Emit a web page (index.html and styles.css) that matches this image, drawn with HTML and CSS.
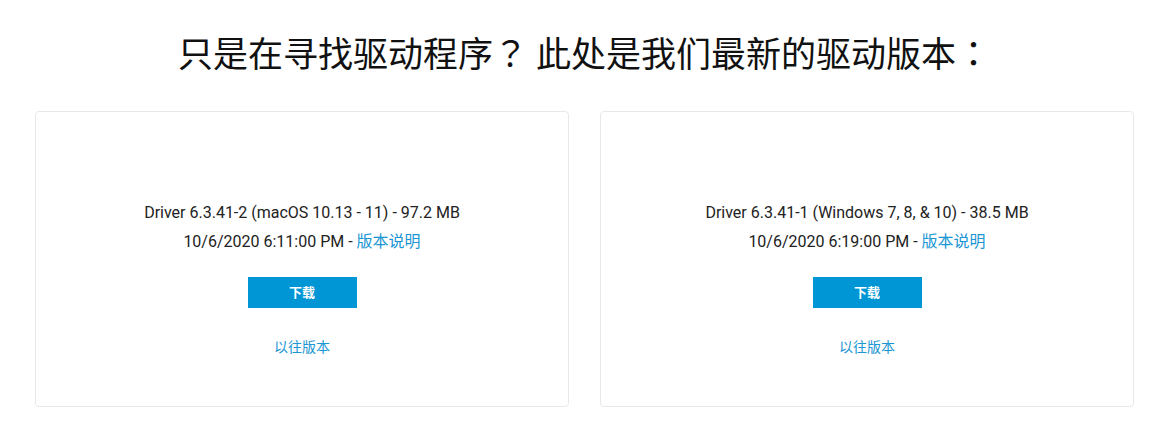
FILE: index.html
```html
<!DOCTYPE html>
<html lang="zh-CN">

<head>
  <meta charset="UTF-8" />
  <meta name="viewport" content="width=device-width, initial-scale=1.0" />
  <title>驱动程序下载</title>
  <link rel="stylesheet" href="styles.css">
</head>

<body>
  <section class="drivers">
    <h1 class="drivers-title" lang="zh-TW">只是在寻找驱动程序？ 此处是我们最新的驱动版本：</h1>

    <div class="drivers-grid">
      <div class="driver-card">
        <p class="driver-name">Driver 6.3.41-2 (macOS 10.13 - 11) - 97.2 MB</p>
        <p class="driver-date">10/6/2020 6:11:00 PM - <a href="#">版本说明</a></p>
        <a class="btn-download" href="#">下载</a>
        <a class="driver-older" href="#">以往版本</a>
      </div>

      <div class="driver-card">
        <p class="driver-name">Driver 6.3.41-1 (Windows 7, 8, &amp; 10) - 38.5 MB</p>
        <p class="driver-date">10/6/2020 6:19:00 PM - <a href="#">版本说明</a></p>
        <a class="btn-download" href="#">下载</a>
        <a class="driver-older" href="#">以往版本</a>
      </div>
    </div>
  </section>
</body>

</html>
```

FILE: styles.css
```css
:root {
  --color-texto: #222;
  --color-enlace: #1a96d4;
  --color-boton: #0096d6;
  --color-borde: #e8e8e8;
}

* {
  box-sizing: border-box;
}

body {
  margin: 0;
  background: #fff;
  color: var(--color-texto);
  font-family: Roboto, "Noto Sans CJK SC", sans-serif;
}

.drivers {
  padding: 0 37px 0 35px;
}

.drivers-title {
  margin: 0;
  padding-top: 31px;
  height: 111px;
  font-size: 35px;
  line-height: 42px;
  font-weight: 400;
  text-align: center;
  color: #111;
  font-family: "Noto Sans CJK TC", sans-serif;
}

.drivers-grid {
  display: grid;
  grid-template-columns: 1fr 1fr;
  gap: 31px;
}

.driver-card {
  display: flex;
  flex-direction: column;
  align-items: center;
  height: 296px;
  padding-top: 86px;
  border: 1px solid var(--color-borde);
  border-radius: 4px;
  text-align: center;
}

.driver-card p {
  margin: 0;
  font-size: 16px;
  line-height: 29px;
}

.driver-card a {
  text-decoration: none;
}

.driver-date a {
  color: var(--color-enlace);
}

.btn-download {
  display: block;
  width: 109px;
  height: 31px;
  margin-top: 21px;
  background: var(--color-boton);
  color: #fff;
  font-size: 13px;
  font-weight: 700;
  line-height: 31px;
}

.driver-older {
  margin-top: 29px;
  color: var(--color-enlace);
  font-size: 14px;
  line-height: 20px;
}
```
